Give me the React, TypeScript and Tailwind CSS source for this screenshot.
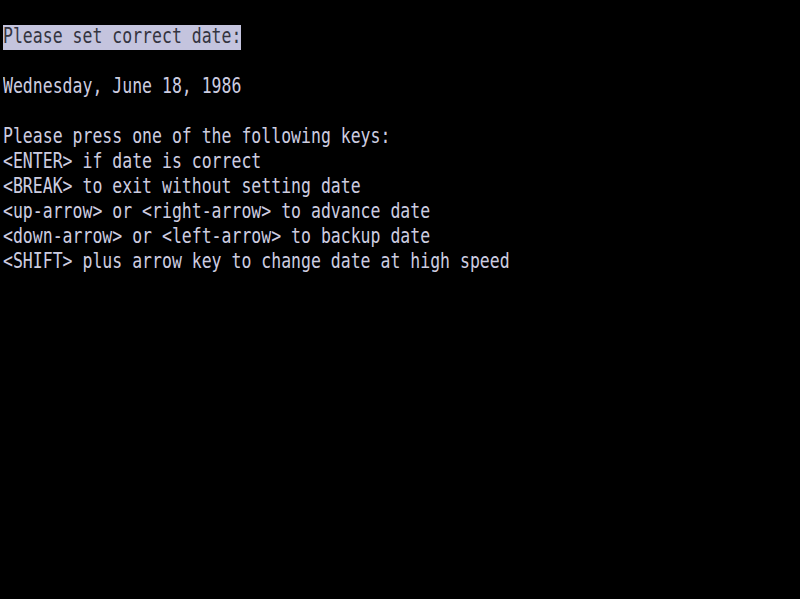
import React from "react";

const lines: string[] = [
  "",
  "Please set correct date:",
  "",
  "Wednesday, June 18, 1986",
  "",
  "Please press one of the following keys:",
  "<ENTER> if date is correct",
  "<BREAK> to exit without setting date",
  "<up-arrow> or <right-arrow> to advance date",
  "<down-arrow> or <left-arrow> to backup date",
  "<SHIFT> plus arrow key to change date at high speed",
];

export default function App() {
  return (
    <div
      className="w-[800px] h-[599px] bg-black overflow-hidden text-[#cdcde0] text-[16.5px]"
      style={{ fontFamily: '"DejaVu Sans Mono", "Liberation Mono", monospace' }}
    >
      {lines.map((line, i) => (
        <div key={i} className="h-[24.96px] leading-[24.96px] pl-[3px] whitespace-pre">
          {i === 1 ? (
            <span className="inline-block h-[24.96px] bg-[#c4c4de] text-[#34343f]">
              <span className="inline-block scale-y-[1.3]">{line}</span>
            </span>
          ) : (
            <span className="inline-block scale-y-[1.3]">{line}</span>
          )}
        </div>
      ))}
    </div>
  );
}
